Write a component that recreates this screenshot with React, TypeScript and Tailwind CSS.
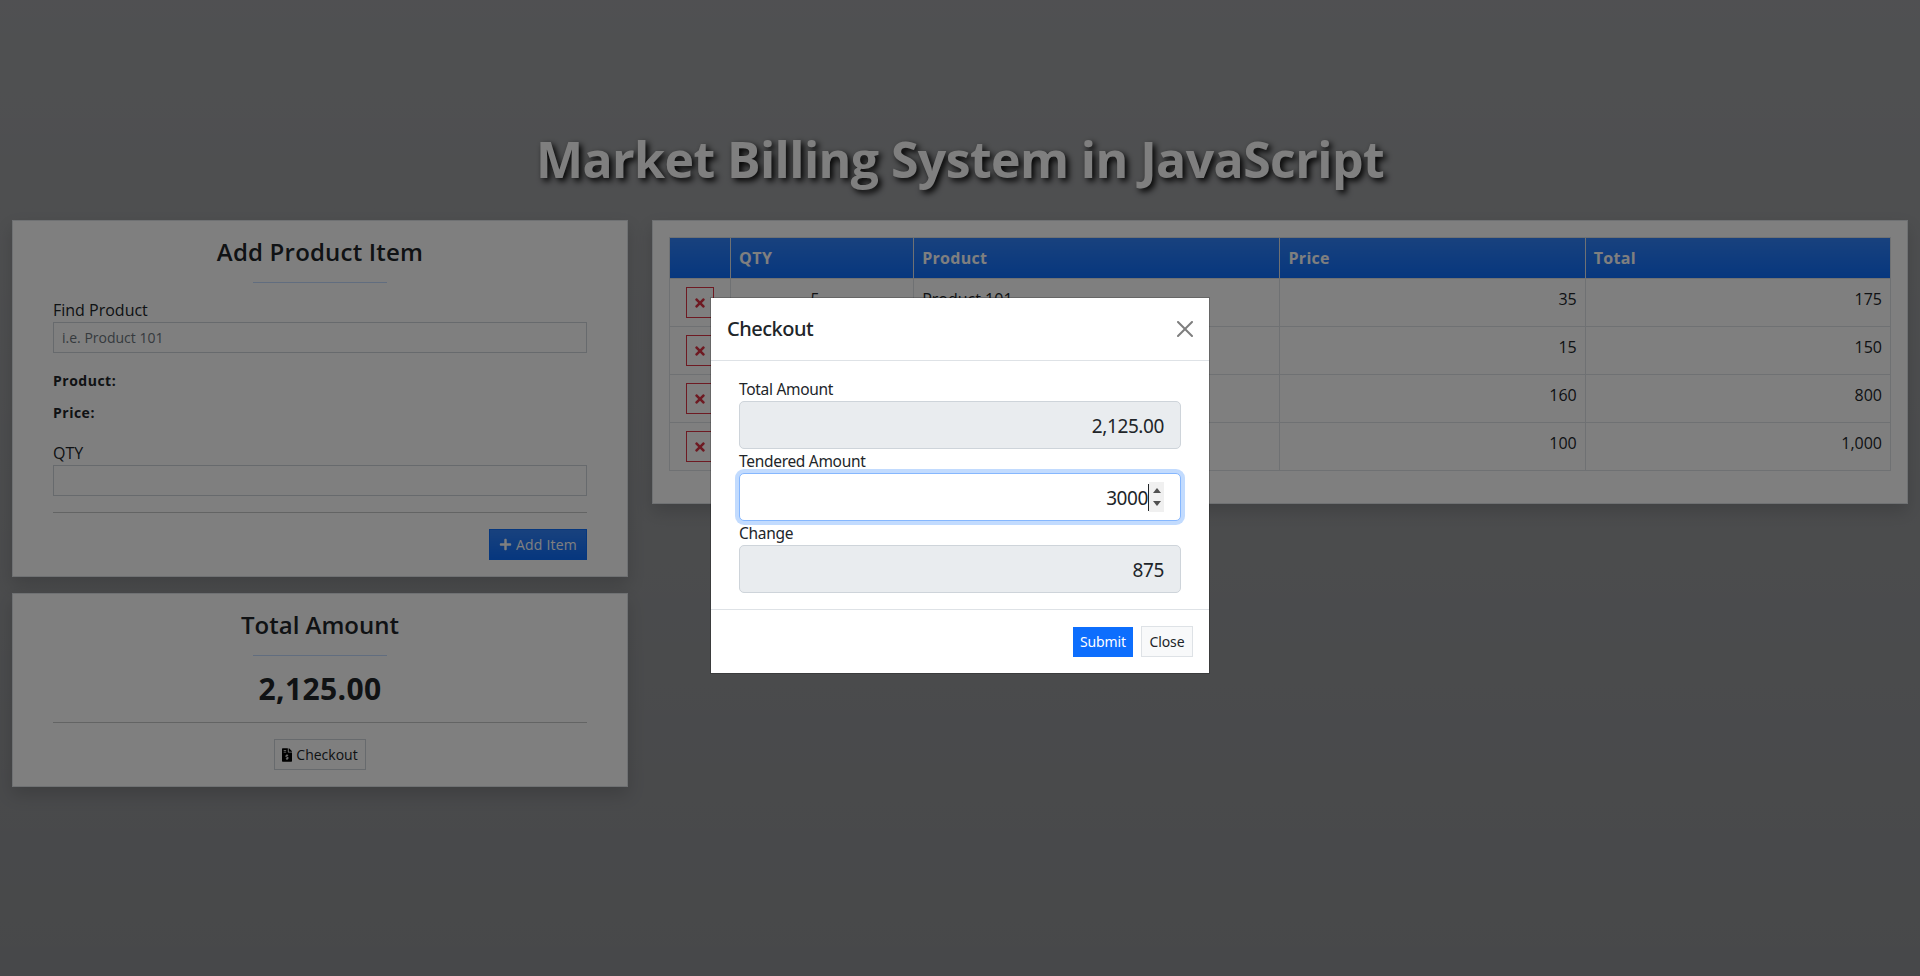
import { FaPlus, FaFileInvoiceDollar, FaTimes } from "react-icons/fa"

const rows = [
    { qty: 5, product: "Product 101", price: "35", total: "175" },
    { qty: 10, product: "Product 102", price: "15", total: "150" },
    { qty: 5, product: "Product 103", price: "160", total: "800" },
    { qty: 10, product: "Product 104", price: "100", total: "1,000" },
]

function Field({ label, value }: { label: string; value: string }) {
    return (
        <div>
            <label className="block text-[15.5px] leading-[24px] tracking-[-0.3px] text-[#212529]">{label}</label>
            <input
                disabled
                value={value}
                className="block w-full h-12 px-4 pt-[2px] text-right text-[19px] tracking-[-0.4px] text-[#212529] bg-[#e9ecef] border border-[#ced4da] rounded-[5px] opacity-100"
            />
        </div>
    )
}

export default function App() {
    return (
        <div className="relative min-h-screen overflow-hidden bg-[#8f9194] bg-gradient-to-b from-white/15 to-white/0 font-['Comic_Sans_MS','Open_Sans',sans-serif] text-[#212529]">
            {/* Page title */}
            <h1 className="h-[220px] pt-[126px] text-center text-[50px] leading-[67px] font-bold tracking-[-0.6px] text-white [text-shadow:3px_3px_6px_#000]">
                Market Billing System in JavaScript
            </h1>

            <div className="grid grid-cols-[640px_1280px]">
                {/* Left column */}
                <div className="px-3 flex flex-col gap-4">
                    <div className="bg-white border border-[#dee2e6] shadow-[0_8px_16px_rgba(0,0,0,0.15)] px-10 pt-4 pb-4">
                        <h3 className="text-[24px] leading-[29px] font-semibold tracking-[0.2px] text-center">Add Product Item</h3>
                        <hr className="w-1/4 mx-auto mt-[16px] mb-[15px] border-t border-[#0d6efd]/25" />
                        <label className="block text-[16px] leading-[24px]">Find Product</label>
                        <input
                            placeholder="i.e. Product 101"
                            className="block w-full h-[31px] px-2 text-[14px] border border-[#ced4da] bg-white placeholder:text-[#6c757d]"
                        />
                        <div className="mt-[17px] text-[14px] leading-[21px] font-bold tracking-[0.5px]">Product:</div>
                        <div className="mt-[11px] text-[14px] leading-[21px] font-bold tracking-[0.5px]">Price:</div>
                        <label className="block mt-[18px] text-[16px] leading-[24px]">QTY</label>
                        <input className="block w-full h-[31px] px-2 text-[14px] border border-[#ced4da] bg-white" />
                        <hr className="mt-4 mb-4 border-t border-[#212529]/25" />
                        <div className="flex justify-end">
                            <button className="flex items-center justify-center gap-1 w-[98px] h-[31px] text-[14px] tracking-[0.2px] text-white bg-[#0d6efd] bg-gradient-to-b from-white/15 to-white/0 border border-[#0d6efd]">
                                <FaPlus className="w-[13px] h-[13px]" /> Add Item
                            </button>
                        </div>
                    </div>

                    <div className="bg-white border border-[#dee2e6] shadow-[0_8px_16px_rgba(0,0,0,0.15)] px-10 pt-4 pb-4">
                        <h3 className="text-[24px] leading-[29px] font-semibold text-center">Total Amount</h3>
                        <hr className="w-1/4 mx-auto mt-[16px] mb-[16px] border-t border-[#0d6efd]/25" />
                        <div className="text-[30px] leading-[34px] font-bold tracking-[0.4px] text-center">2,125.00</div>
                        <hr className="mt-4 mb-4 border-t border-[#212529]/25" />
                        <div className="flex justify-center">
                            <button className="flex items-center justify-center gap-1 w-[92px] h-[31px] text-[14px] bg-white border border-[#ced4da]">
                                <FaFileInvoiceDollar className="w-[10px] h-[14px] text-black" /> Checkout
                            </button>
                        </div>
                    </div>
                </div>

                {/* Right column */}
                <div className="px-3">
                    <div className="bg-white border border-[#dee2e6] shadow-[0_8px_16px_rgba(0,0,0,0.15)] p-4 pb-8">
                        <table className="w-full table-fixed border-collapse">
                            <colgroup>
                                <col className="w-[5%]" />
                                <col className="w-[15%]" />
                                <col className="w-[30%]" />
                                <col className="w-[25%]" />
                                <col className="w-[25%]" />
                            </colgroup>
                            <thead>
                                <tr className="h-[41px] text-white bg-[#0d6efd] bg-gradient-to-b from-white/15 to-white/0">
                                    <th className="border border-[#dee2e6]"></th>
                                    <th className="border border-[#dee2e6] px-2 text-left text-[16px] font-bold tracking-[0.5px]">QTY</th>
                                    <th className="border border-[#dee2e6] px-2 text-left text-[16px] font-bold tracking-[0.3px]">Product</th>
                                    <th className="border border-[#dee2e6] px-2 text-left text-[16px] font-bold tracking-[0.3px]">Price</th>
                                    <th className="border border-[#dee2e6] px-2 text-left text-[16px] font-bold tracking-[0.3px]">Total</th>
                                </tr>
                            </thead>
                            <tbody>
                                {rows.map((row) => (
                                    <tr key={row.product} className="align-top text-[16px] leading-[24px]">
                                        <td className="border border-[#dee2e6] p-2 text-center">
                                            <button className="inline-flex items-center justify-center w-[28px] h-[31px] border border-[#dc3545] text-[#dc3545] align-top">
                                                <FaTimes className="w-[14px] h-[14px]" />
                                            </button>
                                        </td>
                                        <td className="border border-[#dee2e6] pl-2 pr-[22px] py-2 text-center">{row.qty}</td>
                                        <td className="border border-[#dee2e6] p-2">{row.product}</td>
                                        <td className="border border-[#dee2e6] p-2 text-right">{row.price}</td>
                                        <td className="border border-[#dee2e6] p-2 text-right">{row.total}</td>
                                    </tr>
                                ))}
                            </tbody>
                        </table>
                    </div>
                </div>
            </div>

            {/* Modal backdrop */}
            <div className="fixed inset-0 bg-black/50" />

            {/* Checkout modal */}
            <div className="fixed inset-0 flex justify-center items-start pt-[297px] font-['Segoe_UI','Noto_Sans',sans-serif]">
                <div className="w-[500px] bg-white bg-clip-padding border border-black/20">
                    <div className="flex items-center justify-between h-[63px] px-4 border-b border-[#dee2e6]">
                        <h5 className="text-[20px] leading-[24px] font-medium tracking-[-0.5px] text-[#212529]">Checkout</h5>
                        <svg viewBox="0 0 16 16" className="w-4 h-4 opacity-50" fill="#000">
                            <path d="M.293.293a1 1 0 011.414 0L8 6.586 14.293.293a1 1 0 111.414 1.414L9.414 8l6.293 6.293a1 1 0 01-1.414 1.414L8 9.414l-6.293 6.293a1 1 0 01-1.414-1.414L6.586 8 .293 1.707a1 1 0 010-1.414z" />
                        </svg>
                    </div>
                    <div className="px-7 pt-4 pb-4 flex flex-col border-b border-[#dee2e6]">
                        <Field label="Total Amount" value="2,125.00" />
                        <div>
                            <label className="block text-[15.5px] leading-[24px] tracking-[-0.3px] text-[#212529]">Tendered Amount</label>
                            <div className="flex items-center justify-end h-12 px-4 text-[19px] tracking-[-0.4px] text-[#212529] bg-white border border-[#86b7fe] rounded-[5px] shadow-[0_0_0_4px_rgba(13,110,253,0.25)]">
                                <span className="pt-[2px]">3000</span>
                                <span className="w-px h-[27px] bg-[#212529]" />
                                <span className="flex flex-col items-center justify-between w-[15px] h-[30px] py-[6px] bg-[#f0f0f0]">
                                    <svg viewBox="0 0 8 5" className="w-2 h-[5px]" fill="#505050"><path d="M4 0l4 5H0z" /></svg>
                                    <svg viewBox="0 0 8 5" className="w-2 h-[5px]" fill="#505050"><path d="M4 5l4-5H0z" /></svg>
                                </span>
                            </div>
                        </div>
                        <Field label="Change" value="875" />
                    </div>
                    <div className="flex justify-end gap-2 h-[63px] items-center px-4">
                        <button className="w-[60px] h-[30px] text-[14px] tracking-[-0.1px] text-white bg-[#0d6efd] border border-[#0d6efd]">Submit</button>
                        <button className="w-[52px] h-[31px] text-[14px] tracking-[-0.1px] text-[#212529] bg-[#f8f9fa] border border-[#dee2e6]">Close</button>
                    </div>
                </div>
            </div>
        </div>
    )
}
